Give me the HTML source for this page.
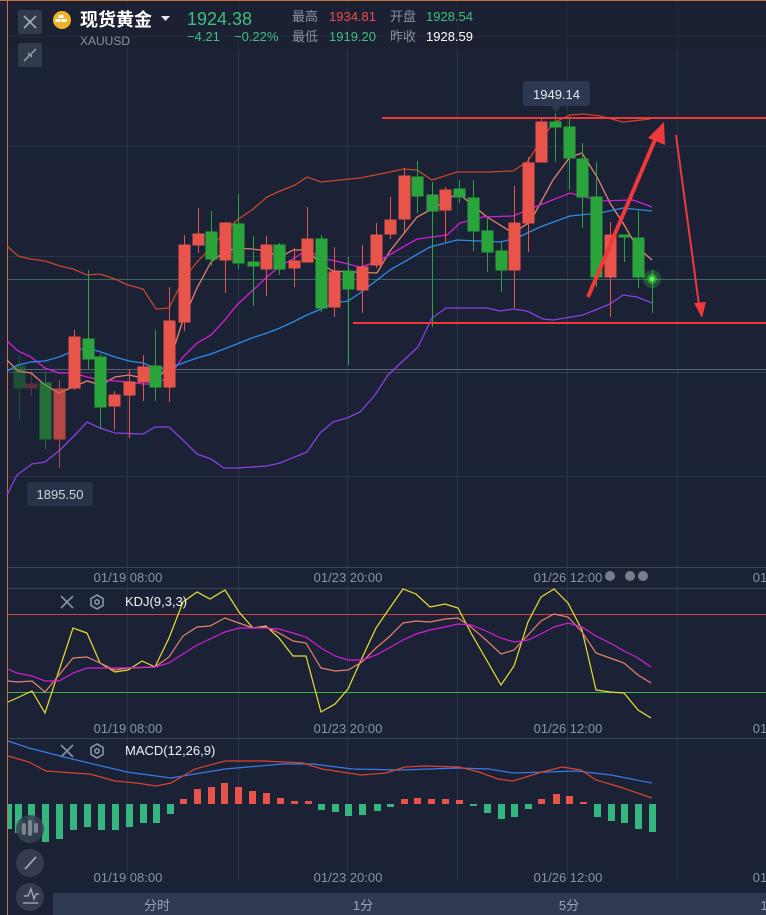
<!DOCTYPE html>
<html><head><meta charset="utf-8"><style>
html,body{margin:0;padding:0;background:#1c2236;width:766px;height:915px;overflow:hidden;font-family:"Liberation Sans","Noto Sans CJK SC",sans-serif}
svg{position:absolute;left:0;top:0}
</style></head><body>
<svg width="766" height="915" viewBox="0 0 766 915" xmlns="http://www.w3.org/2000/svg" font-family="Liberation Sans, Noto Sans CJK SC, sans-serif">
<rect width="766" height="915" fill="#1c2236"/>
<!-- grid -->
<g stroke="#2b3347" stroke-width="1">
<line x1="127.5" y1="0" x2="127.5" y2="880"/><line x1="238.5" y1="0" x2="238.5" y2="880"/>
<line x1="347.5" y1="0" x2="347.5" y2="880"/><line x1="457.5" y1="0" x2="457.5" y2="880"/>
<line x1="567.5" y1="0" x2="567.5" y2="880"/><line x1="677.5" y1="0" x2="677.5" y2="880"/>
<line x1="8" y1="36.5" x2="766" y2="36.5"/><line x1="8" y1="146.5" x2="766" y2="146.5"/>
<line x1="8" y1="256.5" x2="766" y2="256.5"/><line x1="8" y1="476.5" x2="766" y2="476.5"/>
</g>
<line x1="8" y1="279.5" x2="766" y2="279.5" stroke="#3d6560" stroke-width="1"/>
<line x1="8" y1="369.5" x2="766" y2="369.5" stroke="#5a6378" stroke-width="1"/>
<line x1="8" y1="372.5" x2="766" y2="372.5" stroke="#3a4256" stroke-width="1"/>
<line x1="8" y1="567.5" x2="766" y2="567.5" stroke="#3a4256"/>
<line x1="8" y1="588.5" x2="766" y2="588.5" stroke="#3a4256"/>
<line x1="8" y1="738.5" x2="766" y2="738.5" stroke="#3a4256"/>
<!-- left orange line -->
<line x1="7.5" y1="0" x2="7.5" y2="915" stroke="#c8733a" stroke-width="1"/>
<line x1="0" y1="0.5" x2="766" y2="0.5" stroke="#c8733a" stroke-width="1"/>

<!-- Bollinger + MAs -->
<g fill="none" stroke-width="1.3">
<polyline stroke="#c4462c" points="7,246 18,256 30,259 45,261 60,266 73,269 87,275 100,274 115,279 128,285 143,289 156,309 169,308 183,280 197,262 211,248 224,233 237,220 252,210 267,197 280,191 295,185 307,177 321,182 340,180 360,178 390,172 403,169 417,170 432,180 457,172 487,172 513,171 527,162 553,123 570,115 583,114 600,116 623,122 650,119"/>
<polyline stroke="#8a40e0" points="7,495 17,475 32,464 45,462 60,450 73,437 87,422 100,428 115,433 143,434 155,427 169,427 183,440 197,454 211,459 224,468 237,468 267,466 280,463 307,452 320,433 333,422 347,418 360,412 375,395 388,375 404,360 418,347 432,318 446,308 487,308 500,311 513,309 527,311 543,319 553,320 583,315 610,304 623,295 637,297 652,303"/>
<polyline stroke="#e9806f" points="7,360 18,371 31,373 45,385 59,393 73,387 87,381 101,385 115,377 129,375 143,378 155,384 169,363 183,320 197,288 211,262 224,252 237,248 252,249 267,251 280,257 293,250 307,250 321,264 333,271 353,272 377,273 390,251 417,217 432,209 458,193 487,217 513,233 530,222 553,180 570,157 582,153 597,177 610,203 623,223 637,247 652,260"/>
<polyline stroke="#d21fd6" points="7,341 18,351 31,357 45,368 59,373 73,373 87,377 101,380 115,381 129,382 143,384 155,384 169,377 183,357 197,343 211,335 224,321 237,305 252,291 267,277 280,266 293,259 307,250 321,258 340,262 360,267 377,262 417,239 447,235 460,223 483,217 513,216 540,205 570,193 600,201 633,200 652,207"/>
<polyline stroke="#2f8ae8" points="7,371 18,365 31,362 45,361 59,357 73,351 87,348 101,352 115,357 129,361 143,363 155,368 169,368 183,363 197,358 211,354 224,349 237,344 252,338 267,333 280,328 293,322 307,315 321,309 333,303 348,301 360,293 390,270 430,247 457,240 500,242 517,238 540,227 570,216 600,213 623,208 652,211"/>
</g>

<!-- candles -->
<g stroke-width="1">
<g stroke="#2aa53b" fill="#2aa53b" opacity="0.35"><line x1="19.5" y1="355" x2="19.5" y2="420"/><rect x="14" y="366" width="11" height="22"/></g>
<g stroke="#e8544a" fill="#e8544a" opacity="0.3"><line x1="31.5" y1="369" x2="31.5" y2="396"/><rect x="26" y="384" width="11" height="4"/></g>
<g stroke="#2aa53b" fill="#2aa53b" opacity="0.6"><line x1="45.5" y1="372" x2="45.5" y2="449"/><rect x="40" y="383" width="11" height="56"/></g>
<g stroke="#e8544a" fill="#e8544a" opacity="0.75"><line x1="59.5" y1="380" x2="59.5" y2="468"/><rect x="54" y="389" width="11" height="50"/></g>
<g stroke="#e8544a" fill="#e8544a">
<line x1="74.5" y1="330" x2="74.5" y2="390"/><rect x="69" y="337" width="11" height="51"/>
<line x1="114.5" y1="391" x2="114.5" y2="430"/><rect x="109" y="395" width="11" height="11"/>
<line x1="129.5" y1="369" x2="129.5" y2="438"/><rect x="124" y="382" width="11" height="13"/>
<line x1="143.5" y1="355" x2="143.5" y2="401"/><rect x="138" y="367" width="11" height="15"/>
<line x1="169.5" y1="287" x2="169.5" y2="402"/><rect x="164" y="321" width="11" height="66"/>
<line x1="184.5" y1="235" x2="184.5" y2="331"/><rect x="179" y="245" width="11" height="77"/>
<line x1="198.5" y1="208" x2="198.5" y2="253"/><rect x="193" y="234" width="11" height="11"/>
<line x1="225.5" y1="222" x2="225.5" y2="293"/><rect x="220" y="223" width="11" height="37"/>
<line x1="266.5" y1="236" x2="266.5" y2="296"/><rect x="261" y="245" width="11" height="24"/>
<line x1="294.5" y1="248" x2="294.5" y2="287"/><rect x="289" y="261" width="11" height="7"/>
<line x1="307.5" y1="207" x2="307.5" y2="262"/><rect x="302" y="239" width="11" height="23"/>
<line x1="334.5" y1="247" x2="334.5" y2="317"/><rect x="329" y="272" width="11" height="35"/>
<line x1="362.5" y1="245" x2="362.5" y2="313"/><rect x="357" y="267" width="11" height="23"/>
<line x1="376.5" y1="223" x2="376.5" y2="268"/><rect x="371" y="235" width="11" height="30"/>
<line x1="390.5" y1="197" x2="390.5" y2="239"/><rect x="385" y="220" width="11" height="14"/>
<line x1="404.5" y1="168" x2="404.5" y2="232"/><rect x="399" y="176" width="11" height="43"/>
<line x1="445.5" y1="187" x2="445.5" y2="242"/><rect x="440" y="190" width="11" height="20"/>
<line x1="514.5" y1="186" x2="514.5" y2="308"/><rect x="509" y="223" width="11" height="47"/>
<line x1="528.5" y1="157" x2="528.5" y2="252"/><rect x="523" y="163" width="11" height="60"/>
<line x1="541.5" y1="118" x2="541.5" y2="162"/><rect x="536" y="122" width="11" height="40"/>
<line x1="610.5" y1="222" x2="610.5" y2="317"/><rect x="605" y="235" width="11" height="42"/>
</g>
<g stroke="#2aa53b" fill="#2aa53b">
<line x1="88.5" y1="270" x2="88.5" y2="369"/><rect x="83" y="339" width="11" height="20"/>
<line x1="100.5" y1="354" x2="100.5" y2="429"/><rect x="95" y="357" width="11" height="50"/>
<line x1="155.5" y1="330" x2="155.5" y2="401"/><rect x="150" y="366" width="11" height="21"/>
<line x1="211.5" y1="211" x2="211.5" y2="266"/><rect x="206" y="232" width="11" height="27"/>
<line x1="238.5" y1="194" x2="238.5" y2="269"/><rect x="233" y="224" width="11" height="39"/>
<line x1="253.5" y1="236" x2="253.5" y2="306"/><rect x="248" y="262" width="11" height="4"/>
<line x1="279.5" y1="243" x2="279.5" y2="275"/><rect x="274" y="245" width="11" height="24"/>
<line x1="321.5" y1="235" x2="321.5" y2="312"/><rect x="316" y="239" width="11" height="69"/>
<line x1="348.5" y1="257" x2="348.5" y2="365"/><rect x="343" y="271" width="11" height="18"/>
<line x1="417.5" y1="161" x2="417.5" y2="213"/><rect x="412" y="177" width="11" height="19"/>
<line x1="432.5" y1="182" x2="432.5" y2="327"/><rect x="427" y="195" width="11" height="16"/>
<line x1="459.5" y1="180" x2="459.5" y2="203"/><rect x="454" y="189" width="11" height="8"/>
<line x1="473.5" y1="180" x2="473.5" y2="251"/><rect x="468" y="198" width="11" height="33"/>
<line x1="487.5" y1="218" x2="487.5" y2="272"/><rect x="482" y="231" width="11" height="21"/>
<line x1="501.5" y1="242" x2="501.5" y2="292"/><rect x="496" y="251" width="11" height="19"/>
<line x1="555.5" y1="113" x2="555.5" y2="162"/><rect x="550" y="122" width="11" height="5"/>
<line x1="569.5" y1="118" x2="569.5" y2="190"/><rect x="564" y="127" width="11" height="31"/>
<line x1="582.5" y1="143" x2="582.5" y2="228"/><rect x="577" y="159" width="11" height="38"/>
<line x1="596.5" y1="162" x2="596.5" y2="287"/><rect x="591" y="197" width="11" height="80"/>
<line x1="624.5" y1="235" x2="624.5" y2="262"/><rect x="619" y="235" width="11" height="2"/>
<line x1="638.5" y1="211" x2="638.5" y2="288"/><rect x="633" y="238" width="11" height="39"/>
<line x1="652.5" y1="270" x2="652.5" y2="313"/>
</g>
</g>
<circle cx="652" cy="279" r="9" fill="#39e03a" opacity="0.25"/>
<circle cx="652" cy="279" r="5" fill="#39e03a" opacity="0.5"/>
<circle cx="652" cy="279" r="2.5" fill="#5cf55a"/>

<!-- red lines & arrows -->
<line x1="382" y1="118" x2="766" y2="118" stroke="#f0383a" stroke-width="2"/>
<line x1="353" y1="323" x2="766" y2="323" stroke="#f0383a" stroke-width="2"/>
<line x1="588" y1="297" x2="657" y2="135" stroke="#f0383a" stroke-width="4"/>
<polygon points="664,122 665,145 648,138" fill="#f0383a"/>
<line x1="676" y1="135" x2="699" y2="305" stroke="#f0383a" stroke-width="2"/>
<polygon points="702,318 694,303 706,302" fill="#f0383a"/>

<!-- price labels -->
<rect x="523" y="81" width="67" height="25" rx="3" fill="#2e3850"/>
<polygon points="551,106 561,106 556,112" fill="#2e3850"/>
<text x="556.5" y="99" fill="#e6e9f0" font-size="13" text-anchor="middle">1949.14</text>
<rect x="27" y="482" width="66" height="24" rx="3" fill="#2a3249"/>
<text x="60" y="499" fill="#d0d4dd" font-size="13" text-anchor="middle">1895.50</text>

<!-- axis labels -->
<g fill="#8a93a6" font-size="13" text-anchor="middle">
<text x="128" y="582">01/19 08:00</text><text x="348" y="582">01/23 20:00</text><text x="568" y="582">01/26 12:00</text><text x="760" y="582">01</text>
<text x="128" y="733">01/19 08:00</text><text x="348" y="733">01/23 20:00</text><text x="568" y="733">01/26 12:00</text><text x="760" y="733">01</text>
<text x="128" y="882">01/19 08:00</text><text x="348" y="882">01/23 20:00</text><text x="568" y="882">01/26 12:00</text><text x="760" y="882">01</text>
</g>
<g fill="#8f95a3" opacity="0.8"><circle cx="610" cy="576" r="5"/><circle cx="630" cy="576" r="5"/><circle cx="643" cy="576" r="5"/></g>

<!-- KDJ -->
<line x1="8" y1="614.5" x2="766" y2="614.5" stroke="#c9434a" stroke-width="1"/>
<line x1="8" y1="692.5" x2="766" y2="692.5" stroke="#3fb34a" stroke-width="1"/>
<g fill="none" stroke-width="1.2">
<polyline stroke="#e9df2f" points="8,702 17,698 32,691 45,713 73,628 87,633 100,663 115,672 128,670 142,661 155,667 169,638 183,602 197,592 210,599 225,590 239,612 253,628 266,626 279,638 293,656 306,656 321,712 335,704 348,689 362,658 376,628 389,609 403,589 416,594 430,607 445,604 458,608 471,633 486,659 501,685 514,666 528,622 541,597 554,589 568,603 582,630 596,690 610,692 624,693 638,710 651,718"/>
<polyline stroke="#e9806f" points="8,681 17,682 32,681 45,692 73,658 87,657 100,663 115,670 128,668 155,667 169,657 183,636 197,627 210,626 225,618 239,623 253,628 266,627 279,633 293,641 306,643 321,668 335,671 348,670 362,662 376,648 389,637 403,623 416,621 430,622 445,619 458,618 471,627 486,640 501,654 514,650 528,635 541,621 554,614 568,617 582,632 596,653 610,658 624,663 638,675 651,683"/>
<polyline stroke="#d21fd6" points="8,669 17,673 32,676 45,681 59,681 73,673 87,668 115,668 155,667 169,663 183,654 197,645 210,639 225,632 239,628 266,628 279,629 293,633 306,637 321,648 335,656 348,660 362,660 376,655 389,648 403,640 416,634 430,630 445,627 458,624 471,625 486,631 501,638 514,642 528,640 541,634 554,627 568,623 582,627 596,636 610,643 624,651 638,658 651,667"/>
</g>
<g stroke="#8a93a6" stroke-width="1.6" fill="none">
<line x1="61" y1="596" x2="73" y2="608"/><line x1="73" y1="596" x2="61" y2="608"/>
<polygon points="97,595 103,598.5 103,605.5 97,609 91,605.5 91,598.5"/><circle cx="97" cy="602" r="2.2"/>
<line x1="61" y1="745" x2="73" y2="757"/><line x1="73" y1="745" x2="61" y2="757"/>
<polygon points="97,744 103,747.5 103,754.5 97,758 91,754.5 91,747.5"/><circle cx="97" cy="751" r="2.2"/>
</g>
<text x="125" y="606" fill="#eef0f5" font-size="13">KDJ(9,3,3)</text>
<text x="125" y="755" fill="#eef0f5" font-size="13">MACD(12,26,9)</text>

<!-- MACD -->
<g fill="#35b67e">
<rect x="8" y="804" width="4" height="25"/><rect x="15" y="804" width="7" height="29"/><rect x="28" y="804" width="7" height="29"/><rect x="42" y="804" width="7" height="38"/><rect x="56" y="804" width="7" height="35"/><rect x="70" y="804" width="7" height="26"/><rect x="84" y="804" width="7" height="23"/><rect x="98" y="804" width="7" height="26"/><rect x="112" y="804" width="7" height="26"/><rect x="126" y="804" width="7" height="23"/><rect x="140" y="804" width="7" height="19"/><rect x="153" y="804" width="7" height="19"/><rect x="167" y="804" width="7" height="10"/>
<rect x="318" y="804" width="7" height="6"/><rect x="332" y="804" width="7" height="8"/><rect x="345" y="804" width="7" height="12"/><rect x="359" y="804" width="7" height="11"/><rect x="374" y="804" width="7" height="7"/><rect x="387" y="804" width="7" height="3"/>
<rect x="470" y="804" width="7" height="2"/><rect x="484" y="804" width="7" height="9"/><rect x="498" y="804" width="7" height="15"/><rect x="511" y="804" width="7" height="13"/><rect x="525" y="804" width="7" height="5"/>
<rect x="594" y="804" width="7" height="13"/><rect x="608" y="804" width="7" height="17"/><rect x="621" y="804" width="7" height="19"/><rect x="635" y="804" width="7" height="25"/><rect x="649" y="804" width="7" height="28"/>
</g>
<g fill="#e8544a">
<rect x="180" y="799" width="7" height="5"/><rect x="194" y="789" width="7" height="15"/><rect x="208" y="787" width="7" height="17"/><rect x="221" y="783" width="7" height="21"/><rect x="235" y="787" width="7" height="17"/><rect x="249" y="791" width="7" height="13"/><rect x="263" y="793" width="7" height="11"/><rect x="277" y="798" width="7" height="6"/><rect x="291" y="801" width="7" height="3"/><rect x="305" y="801" width="7" height="3"/>
<rect x="401" y="799" width="7" height="5"/><rect x="414" y="798" width="7" height="6"/><rect x="428" y="799" width="7" height="5"/><rect x="442" y="799" width="7" height="5"/><rect x="456" y="800" width="7" height="4"/>
<rect x="538" y="799" width="7" height="5"/><rect x="553" y="794" width="7" height="10"/><rect x="566" y="796" width="7" height="8"/><rect x="580" y="802" width="7" height="2"/>
</g>
<g fill="none" stroke-width="1.2">
<polyline stroke="#3a78e6" points="8,741 29,748 68,758 127,772 171,778 225,769 283,764 313,764 352,769 401,770 459,768 489,769 513,773 547,772 576,771 611,775 652,783"/>
<polyline stroke="#d9442f" points="8,756 29,762 46,771 73,773 90,774 115,781 137,783 156,786 171,783 195,769 225,761 264,761 303,763 322,769 361,775 386,773 405,767 425,766 459,767 479,772 498,779 513,781 542,772 562,767 581,770 596,780 620,787 652,798"/>
</g>

<!-- left bottom round buttons -->
<g fill="#3a4154" opacity="0.85"><circle cx="30" cy="829" r="14"/><circle cx="30" cy="863" r="14"/><circle cx="30" cy="897" r="14"/></g>
<g stroke="#9aa0ad" stroke-width="2" fill="none">
<line x1="25" y1="869" x2="36" y2="857"/>
<polyline points="24,896 28,896 31,889 34,899 36,894 39,894" stroke-width="1.5"/>
<line x1="23" y1="903" x2="38" y2="903" stroke-width="1.5"/>
</g>
<g fill="#9aa0ad" opacity="0.7"><rect x="22" y="823" width="4" height="12" rx="2"/><rect x="28" y="820" width="4" height="16" rx="2"/><rect x="34" y="823" width="4" height="10" rx="2"/></g>

<!-- bottom tabs -->
<rect x="53" y="893" width="713" height="22" fill="#2f3a52"/>
<g fill="#9aa3b5" font-size="13" text-anchor="middle">
<text x="157" y="910">分时</text><text x="363" y="910">1分</text><text x="569" y="910">5分</text><text x="764" y="910">1</text>
</g>

<!-- header -->
<rect x="8" y="1" width="758" height="48" fill="#1b2031" opacity="0.55"/>
<rect x="18" y="10" width="24" height="24" rx="2" fill="#323a4d"/>
<g stroke="#a0a6b3" stroke-width="1.8"><line x1="24" y1="16" x2="36" y2="28"/><line x1="36" y1="16" x2="24" y2="28"/></g>
<rect x="18" y="43" width="24" height="24" rx="2" fill="#323a4d"/>
<g stroke="#8e95a3" stroke-width="1.6"><line x1="24" y1="61" x2="29" y2="56"/><line x1="36" y1="49" x2="31" y2="54"/></g>
<g fill="#8e95a3"><polygon points="28,52 32,56 28,56"/><polygon points="32,58 28,54 32,54"/></g>
<circle cx="62" cy="20" r="9" fill="#f0b429"/>
<g fill="#fff"><rect x="58.5" y="15" width="5" height="3"/><rect x="55.5" y="19" width="5" height="3"/><rect x="61.5" y="19" width="5" height="3"/><rect x="58" y="23" width="0" height="0"/></g>
<text x="80" y="26" fill="#ffffff" font-size="18" font-weight="bold">现货黄金</text>
<polygon points="161,16 170,16 165.5,21" fill="#e6e8ee"/>
<text x="80" y="45" fill="#8a919f" font-size="12">XAUUSD</text>
<text x="187" y="25" fill="#3fbf7f" font-size="18">1924.38</text>
<text x="187" y="41" fill="#3fbf7f" font-size="13">−4.21</text>
<text x="234" y="41" fill="#3fbf7f" font-size="13">−0.22%</text>
<g font-size="13">
<text x="292" y="21" fill="#8a919f">最高</text><text x="329" y="21" fill="#ef4b4b">1934.81</text>
<text x="390" y="21" fill="#8a919f">开盘</text><text x="426" y="21" fill="#3fbf7f">1928.54</text>
<text x="292" y="41" fill="#8a919f">最低</text><text x="329" y="41" fill="#3fbf7f">1919.20</text>
<text x="390" y="41" fill="#8a919f">昨收</text><text x="426" y="41" fill="#ffffff">1928.59</text>
</g>
</svg>
</body></html>
